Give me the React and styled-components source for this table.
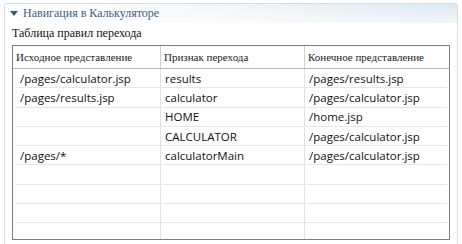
import styled, { createGlobalStyle } from 'styled-components'

const GlobalStyle = createGlobalStyle`
  html, body {
    margin: 0;
    background: #ffffff;
  }
`

const rows = [
  ['/pages/calculator.jsp', 'results', '/pages/results.jsp'],
  ['/pages/results.jsp', 'calculator', '/pages/calculator.jsp'],
  ['', 'HOME', '/home.jsp'],
  ['', 'CALCULATOR', '/pages/calculator.jsp'],
  ['/pages/*', 'calculatorMain', '/pages/calculator.jsp'],
  ['', '', ''],
  ['', '', ''],
  ['', '', ''],
  ['', '', ''],
]

const App = () => {
  return (
    <Page>
      <GlobalStyle />
      <Panel>
        <PanelHeader>
          <svg width="8" height="5" viewBox="0 0 8 5">
            <polygon points="0,0 8,0 4,5" fill="#3b5876" />
          </svg>
          <Title>Навигация в Калькуляторе</Title>
        </PanelHeader>
        <Content>
          <Caption>Таблица правил перехода</Caption>
          <Table>
            <HeaderRow>
              <HeadCell>Исходное представление</HeadCell>
              <HeadCell $divider>Признак перехода</HeadCell>
              <HeadCell $divider>Конечное представление</HeadCell>
            </HeaderRow>
            <Body>
              {rows.map((r, i) => (
                <Row key={i} $last={i === rows.length - 1}>
                  <Cell>{r[0]}</Cell>
                  <Cell $divider>{r[1]}</Cell>
                  <Cell $divider>{r[2]}</Cell>
                </Row>
              ))}
            </Body>
          </Table>
        </Content>
      </Panel>
    </Page>
  )
}

const Page = styled.div`
  height: 244px;
  padding: 3px 4px 0 4px;
  box-sizing: border-box;
  overflow: hidden;
`

const Panel = styled.div`
  height: 100%;
  border: 1px solid #d6dee4;
  border-bottom: none;
  border-radius: 3px 3px 0 0;
  box-sizing: border-box;
`

const PanelHeader = styled.div`
  height: 19px;
  display: flex;
  align-items: center;
  gap: 5px;
  padding-left: 5px;
  background:
    linear-gradient(to bottom, rgba(255, 255, 255, 0) 0%, rgba(255, 255, 255, 0.6) 100%),
    linear-gradient(to right, #ffffff 0%, #f3f7fa 45%, #dce8f0 100%);
`

const Title = styled.span`
  font-family: "Liberation Serif", "DejaVu Serif", serif;
  font-size: 12px;
  color: #425f80;
`

const Content = styled.div`
  padding: 0 7px;
`

const Caption = styled.div`
  font-family: "Liberation Serif", "DejaVu Serif", serif;
  font-size: 12px;
  line-height: 16px;
  color: #111;
  margin: 2px 0 4px;
`

const Table = styled.div`
  height: 195px;
  border: 1px solid #7e7e7e;
  box-sizing: border-box;
  display: flex;
  flex-direction: column;
  overflow: hidden;
`

const HeaderRow = styled.div`
  display: grid;
  grid-template-columns: 147px 144px 1fr;
  height: 23px;
  box-sizing: border-box;
  border-bottom: 1px solid #b8b8b8;
`

const HeadCell = styled.div`
  display: flex;
  align-items: center;
  padding-left: 3px;
  border-left: ${(p) => (p.$divider ? '1px solid #cfcfcf' : 'none')};
  font-family: "Liberation Serif", "DejaVu Serif", serif;
  font-size: 11px;
  color: #222;
  white-space: nowrap;
`

const Body = styled.div`
  flex: 1;
  overflow: hidden;
`

const Row = styled.div`
  display: grid;
  grid-template-columns: 144px 144px 1fr;
  margin: 0 2px 0 3px;
  height: 19.3px;
  box-sizing: border-box;
  border-bottom: ${(p) => (p.$last ? 'none' : '1px solid #e6e6e6')};
`

const Cell = styled.div`
  display: flex;
  align-items: center;
  padding-left: 4px;
  border-left: ${(p) => (p.$divider ? '1px solid #e2e2e2' : 'none')};
  font-family: "Open Sans", "Liberation Sans", sans-serif;
  font-size: 11.5px;
  color: #111;
  white-space: nowrap;
`

export default App
